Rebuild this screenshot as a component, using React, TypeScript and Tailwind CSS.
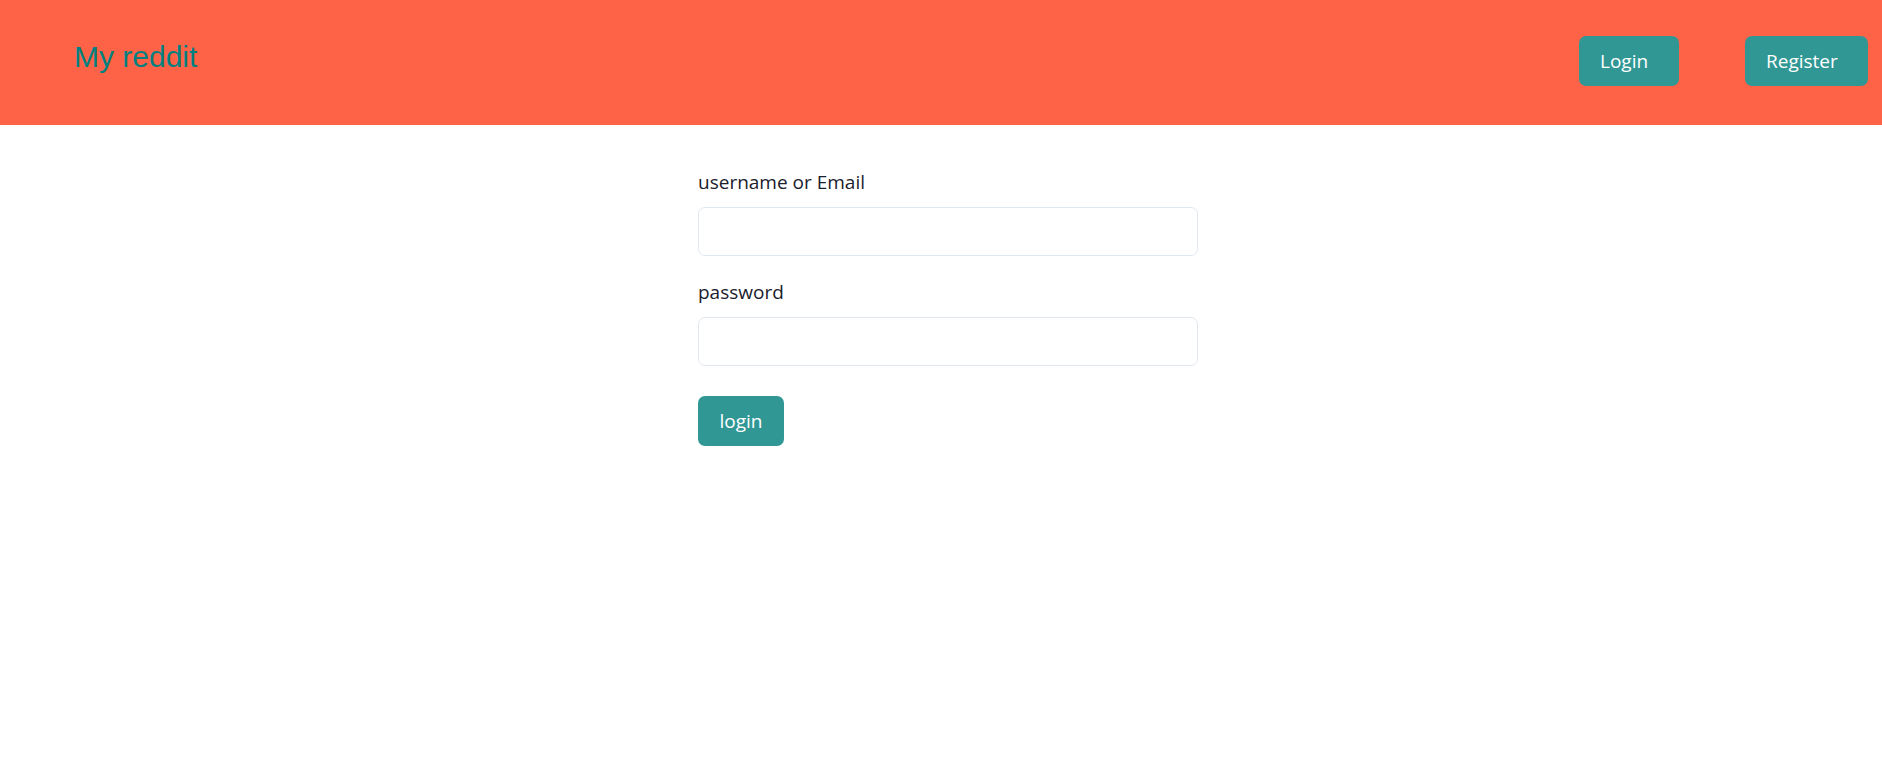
import React from "react";

export default function App() {
  const ui = { fontFamily: '"Open Sans", "Noto Sans", sans-serif' };
  return (
    <div className="min-h-[777px] bg-white" style={ui}>
      <header className="flex h-[125px] items-start bg-[#ff6347]">
        <div
          className="ml-[74px] mt-[42px] text-[30px] leading-[30px] text-[#008080]"
          style={{ fontFamily: '"Liberation Sans", Arial, sans-serif' }}
        >
          My reddit
        </div>
        <div className="ml-auto mr-[14px] mt-[36px] flex gap-[66px]">
          <button className="flex h-[50px] w-[100px] items-center rounded-[7px] bg-[#319795] pl-[21px] text-[19px] text-white">
            Login
          </button>
          <button className="flex h-[50px] w-[123px] items-center rounded-[7px] bg-[#319795] pl-[21px] text-[19px] text-white">
            Register
          </button>
        </div>
      </header>
      <main className="ml-[698px] w-[500px] pt-[43px]">
        <label className="block h-[29px] text-[19px] leading-[29px] text-[#1a202c]">
          username or Email
        </label>
        <input className="mt-[10px] block h-[49px] w-full rounded-[7px] border border-[#e2e8f0] px-4 outline-none" />
        <label className="mt-[22px] block h-[29px] text-[19px] leading-[29px] text-[#1a202c]">
          password
        </label>
        <input
          type="password"
          className="mt-[10px] block h-[49px] w-full rounded-[7px] border border-[#e2e8f0] px-4 outline-none"
        />
        <button className="mt-[30px] flex h-[50px] w-[86px] items-center justify-center rounded-[7px] bg-[#319795] text-[19px] text-white">
          login
        </button>
      </main>
    </div>
  );
}
